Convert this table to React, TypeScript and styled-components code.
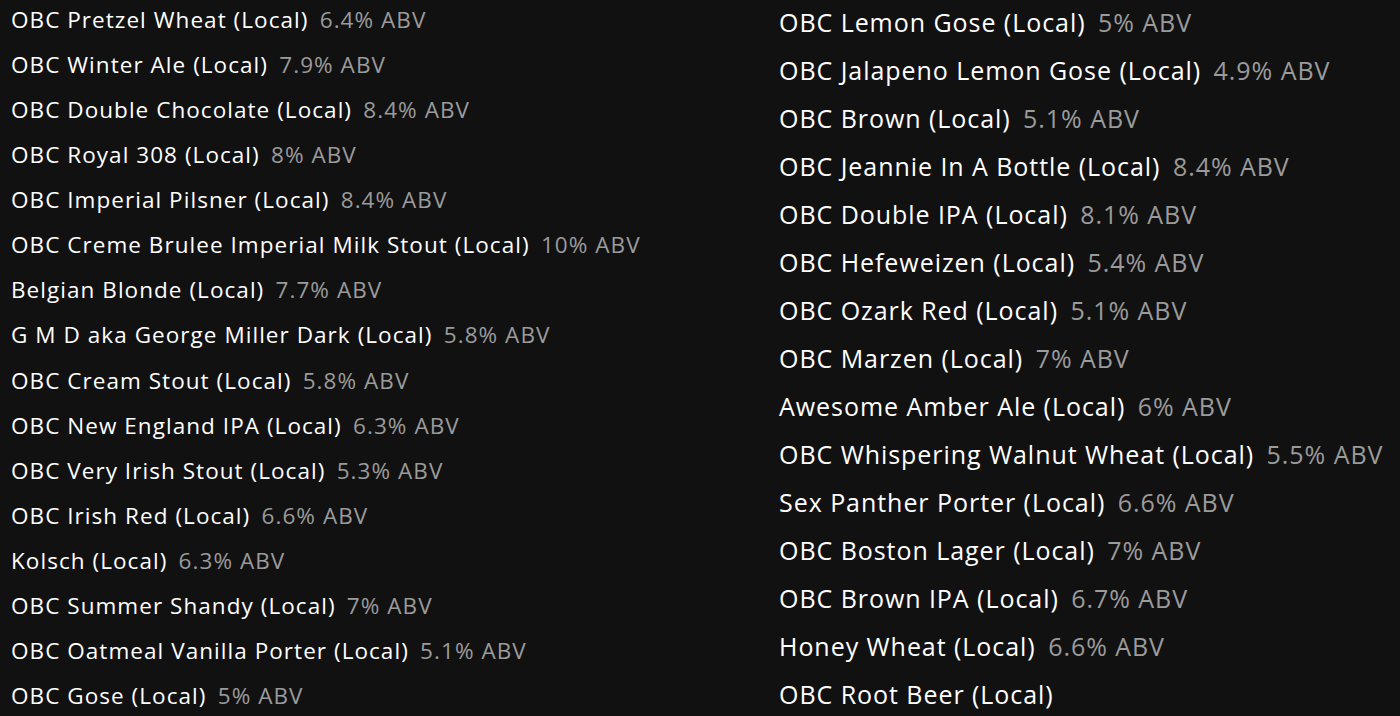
import styled, { createGlobalStyle } from 'styled-components';

const GlobalStyle = createGlobalStyle`
  html, body {
    margin: 0;
    padding: 0;
    background: #111111;
  }
`;

type Beer = { name: string; abv?: string };

const leftBeers: Beer[] = [
  { name: 'OBC Pretzel Wheat (Local)', abv: '6.4%' },
  { name: 'OBC Winter Ale (Local)', abv: '7.9%' },
  { name: 'OBC Double Chocolate (Local)', abv: '8.4%' },
  { name: 'OBC Royal 308 (Local)', abv: '8%' },
  { name: 'OBC Imperial Pilsner (Local)', abv: '8.4%' },
  { name: 'OBC Creme Brulee Imperial Milk Stout (Local)', abv: '10%' },
  { name: 'Belgian Blonde (Local)', abv: '7.7%' },
  { name: 'G M D aka George Miller Dark (Local)', abv: '5.8%' },
  { name: 'OBC Cream Stout (Local)', abv: '5.8%' },
  { name: 'OBC New England IPA (Local)', abv: '6.3%' },
  { name: 'OBC Very Irish Stout (Local)', abv: '5.3%' },
  { name: 'OBC Irish Red (Local)', abv: '6.6%' },
  { name: 'Kolsch (Local)', abv: '6.3%' },
  { name: 'OBC Summer Shandy (Local)', abv: '7%' },
  { name: 'OBC Oatmeal Vanilla Porter (Local)', abv: '5.1%' },
  { name: 'OBC Gose (Local)', abv: '5%' },
];

const rightBeers: Beer[] = [
  { name: 'OBC Lemon Gose (Local)', abv: '5%' },
  { name: 'OBC Jalapeno Lemon Gose (Local)', abv: '4.9%' },
  { name: 'OBC Brown (Local)', abv: '5.1%' },
  { name: 'OBC Jeannie In A Bottle (Local)', abv: '8.4%' },
  { name: 'OBC Double IPA (Local)', abv: '8.1%' },
  { name: 'OBC Hefeweizen (Local)', abv: '5.4%' },
  { name: 'OBC Ozark Red (Local)', abv: '5.1%' },
  { name: 'OBC Marzen (Local)', abv: '7%' },
  { name: 'Awesome Amber Ale (Local)', abv: '6%' },
  { name: 'OBC Whispering Walnut Wheat (Local)', abv: '5.5%' },
  { name: 'Sex Panther Porter (Local)', abv: '6.6%' },
  { name: 'OBC Boston Lager (Local)', abv: '7%' },
  { name: 'OBC Brown IPA (Local)', abv: '6.7%' },
  { name: 'Honey Wheat (Local)', abv: '6.6%' },
  { name: 'OBC Root Beer (Local)' },
];

const Board = styled.main`
  display: grid;
  grid-template-columns: 768px 1fr;
  height: 100vh;
  overflow: hidden;
  font-family: 'Open Sans', Roboto, sans-serif;
`;

const Column = styled.ul<{ $size: number; $lineHeight: number; $spacing: number }>`
  display: flex;
  flex-direction: column;
  justify-content: space-between;
  margin: 0;
  padding: 0 0 0 11px;
  list-style: none;
  font-size: ${({ $size }) => $size}px;
  line-height: ${({ $lineHeight }) => $lineHeight}px;
  letter-spacing: ${({ $spacing }) => $spacing}px;
`;

const Item = styled.li`
  white-space: nowrap;
  color: #ffffff;
`;

const Abv = styled.span`
  margin-left: 0.5em;
  color: #9b9b9b;
`;

const BeerList = ({
  beers,
  size,
  lineHeight,
  spacing,
}: {
  beers: Beer[];
  size: number;
  lineHeight: number;
  spacing: number;
}) => (
  <Column $size={size} $lineHeight={lineHeight} $spacing={spacing}>
    {beers.map((beer) => (
      <Item key={beer.name}>
        {beer.name}
        {!!beer.abv && <Abv>{beer.abv} ABV</Abv>}
      </Item>
    ))}
  </Column>
);

export default function App() {
  return (
    <>
      <GlobalStyle />
      <Board>
        <BeerList beers={leftBeers} size={22.5} lineHeight={40} spacing={1.05} />
        <BeerList beers={rightBeers} size={25} lineHeight={44} spacing={0.95} />
      </Board>
    </>
  );
}
